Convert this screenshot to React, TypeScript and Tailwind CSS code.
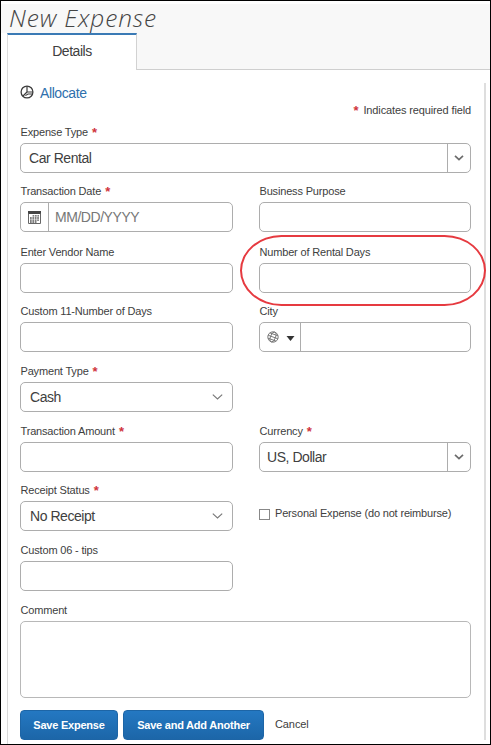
import type { ReactNode } from "react";

const BOX = "flex h-[30px] rounded-[5px] border border-[#adadad] bg-white";
const VALUE = "text-[14px] leading-[28px] tracking-[-0.45px]";

function Label({ text, required }: { text: string; required?: boolean }) {
  return (
    <div className="flex h-[18px] whitespace-pre pl-[0.5px] text-[11px] leading-[15px] tracking-[-0.17px] text-[#404040]">
      {text}
      {required && <Star />}
    </div>
  );
}

function Star() {
  return <span className="ml-[4px] h-[12px] text-[13px] leading-[15px] font-bold text-[#d0343c]">*</span>;
}

function Field({ label, required, children }: { label: string; required?: boolean; children?: ReactNode }) {
  return (
    <div>
      <Label text={label} required={required} />
      <div className={BOX}>{children}</div>
    </div>
  );
}

function ComboArrow() {
  return (
    <div className="flex w-[23px] items-center justify-center border-l border-[#adadad]">
      <svg width="10" height="6" viewBox="0 0 10 6" fill="none" stroke="#6c6c6c" strokeWidth="1.7">
        <path d="M1 .8 5 4.6 9 .8" />
      </svg>
    </div>
  );
}

function SelectArrow() {
  return (
    <svg className="mr-[9px] self-center" width="11" height="6" viewBox="0 0 11 6" fill="none" stroke="#777" strokeWidth="1.1">
      <path d="M.8 .6 5.5 5 10.2 .6" />
    </svg>
  );
}

function PieIcon() {
  return (
    <svg width="14" height="14" viewBox="0 0 14 14" fill="none" stroke="#3c3c3c" strokeWidth="1.3">
      <circle cx="7" cy="7" r="5.9" />
      <path d="M7 1.2V7M7 7h5.8M7 7 3 11" strokeWidth="1.2" />
      <path d="M5.4 10.6 8 9h4" strokeWidth="1.1" />
    </svg>
  );
}

function CalendarIcon() {
  return (
    <svg width="13" height="13" viewBox="0 0 13 13">
      <path d="M0 0h13v3H0z" fill="#444" />
      <path d="M.5 2.5v10h12v-10" fill="none" stroke="#666" />
      <path d="M4.6 4.9h6.4M2 7h9M2 9.1h9M2 11h6.5" stroke="#555" strokeWidth="1.4" strokeDasharray="1.7 .7" />
    </svg>
  );
}

function GlobeIcon() {
  return (
    <svg width="12" height="12" viewBox="0 0 12 12" fill="none" stroke="#777" strokeWidth=".9">
      <g transform="rotate(20 6 6)">
        <circle cx="6" cy="6" r="5.2" />
        <ellipse cx="6" cy="6" rx="2.5" ry="5.2" />
        <path d="M.8 6h10.4M1.7 3.2h8.6M1.7 8.8h8.6" />
      </g>
    </svg>
  );
}

const BUTTON =
  "h-[30px] rounded-[4px] border border-[#1d65a6] bg-linear-to-b from-[#2478c2] to-[#1c66a8] text-center text-[11px] leading-[28px] tracking-[-0.22px] font-bold text-white whitespace-nowrap";

export default function App() {
  return (
    <div className="relative flex h-[745px] w-[491px] flex-col overflow-hidden border border-black bg-white font-['Liberation_Sans',Arial,sans-serif] text-[#404040]">
      <header className="flex h-[69px] shrink-0 flex-col border-t-[3px] border-white bg-[#f8f8f8]">
        <h1 className="h-[29px] pl-[8px] font-['Open_Sans',sans-serif] text-[24.5px] leading-[27px] font-light tracking-[0.85px] whitespace-nowrap text-[#444] italic">
          New Expense
        </h1>
        <div className="flex h-[37px]">
          <div className="w-[6px] bg-white" />
          <div className="w-[130px] border-t-2 border-r border-l border-t-[#3a7ab5] border-r-[#d2d2d2] border-l-[#ddd] bg-white text-center text-[14px] leading-[33px] tracking-[-0.45px]">
            Details
          </div>
          <div className="flex-1 border-b border-[#cfcfcf]" />
        </div>
      </header>

      <div className="flex flex-1 pl-[6px]">
        <main className="w-[477px] border-l border-[#dadada] pl-[12px]">
          <div className="flex h-[32px] items-end gap-[6px]">
            <div className="mb-[3px]"><PieIcon /></div>
            <a className="text-[14px] leading-[17px] tracking-[-0.4px] text-[#2e70ad]">Allocate</a>
          </div>
          <div className="flex h-[23px] w-[451px] justify-end text-[11px] leading-[16px] tracking-[-0.13px]">
            <span className="mr-[5px] text-[13px] leading-[17px] font-bold text-[#d0343c]">*</span>
            <span>Indicates required field</span>
          </div>

          <div className="grid w-[451px] grid-cols-[213px_212px] grid-rows-[59px_61px_59px_60px_60px_59px_60px_60px] gap-x-[26px]">
            <div className="col-span-2">
              <Field label="Expense Type" required>
                <span className={`flex-1 pl-[8px] ${VALUE}`}>Car Rental</span>
                <ComboArrow />
              </Field>
            </div>

            <Field label="Transaction Date" required>
              <div className="flex w-[28px] items-center justify-center border-r border-[#adadad]"><CalendarIcon /></div>
              <span className={`pl-[6px] text-[#777] ${VALUE}`}>MM/DD/YYYY</span>
            </Field>
            <Field label="Business Purpose" />

            <Field label="Enter Vendor Name" />
            <Field label="Number of Rental Days" />

            <Field label="Custom 11-Number of Days" />
            <Field label="City">
              <div className="flex w-[41px] items-center gap-[7px] border-r border-[#adadad] pl-[7px]">
                <GlobeIcon />
                <svg className="mt-[2px]" width="9" height="5" viewBox="0 0 8 5"><path d="M0 0h8L4 5z" fill="#333" /></svg>
              </div>
            </Field>

            <div className="col-span-2 w-[213px]">
              <Field label="Payment Type" required>
                <span className={`flex-1 pl-[9px] ${VALUE}`}>Cash</span>
                <SelectArrow />
              </Field>
            </div>

            <Field label="Transaction Amount" required />
            <Field label="Currency" required>
              <span className={`flex-1 pl-[7px] ${VALUE}`}>US, Dollar</span>
              <ComboArrow />
            </Field>

            <Field label="Receipt Status" required>
              <span className={`flex-1 pl-[9px] ${VALUE}`}>No Receipt</span>
              <SelectArrow />
            </Field>
            <div className="flex pt-[22px] text-[11px] leading-[16px] tracking-[-0.17px]">
              <span className="mt-[4px] mr-[5px] h-[11px] w-[11px] border border-[#888]" />
              <span className="whitespace-nowrap">Personal Expense (do not reimburse)</span>
            </div>

            <div className="col-span-2 w-[213px]">
              <Field label="Custom 06 - tips" />
            </div>
          </div>

          <Label text="Comment" />
          <div className="h-[77px] w-[451px] rounded-[5px] border border-[#b8b8b8]" />

          <div className="mt-[12px] flex">
            <div className={`w-[98px] ${BUTTON}`}>Save Expense</div>
            <div className={`ml-[5px] w-[141px] ${BUTTON}`}>Save and Add Another</div>
            <div className="ml-[11px] text-[11px] leading-[29px] tracking-[-0.1px]">Cancel</div>
          </div>
        </main>
        <div className="mt-[13px] mb-[4px] w-[2px] bg-[#dedede]" />
      </div>

      <div className="absolute top-[234px] left-[239px] h-[71px] w-[246px] rounded-[42px/36px] border-2 border-[#e63a40]" />
    </div>
  );
}
